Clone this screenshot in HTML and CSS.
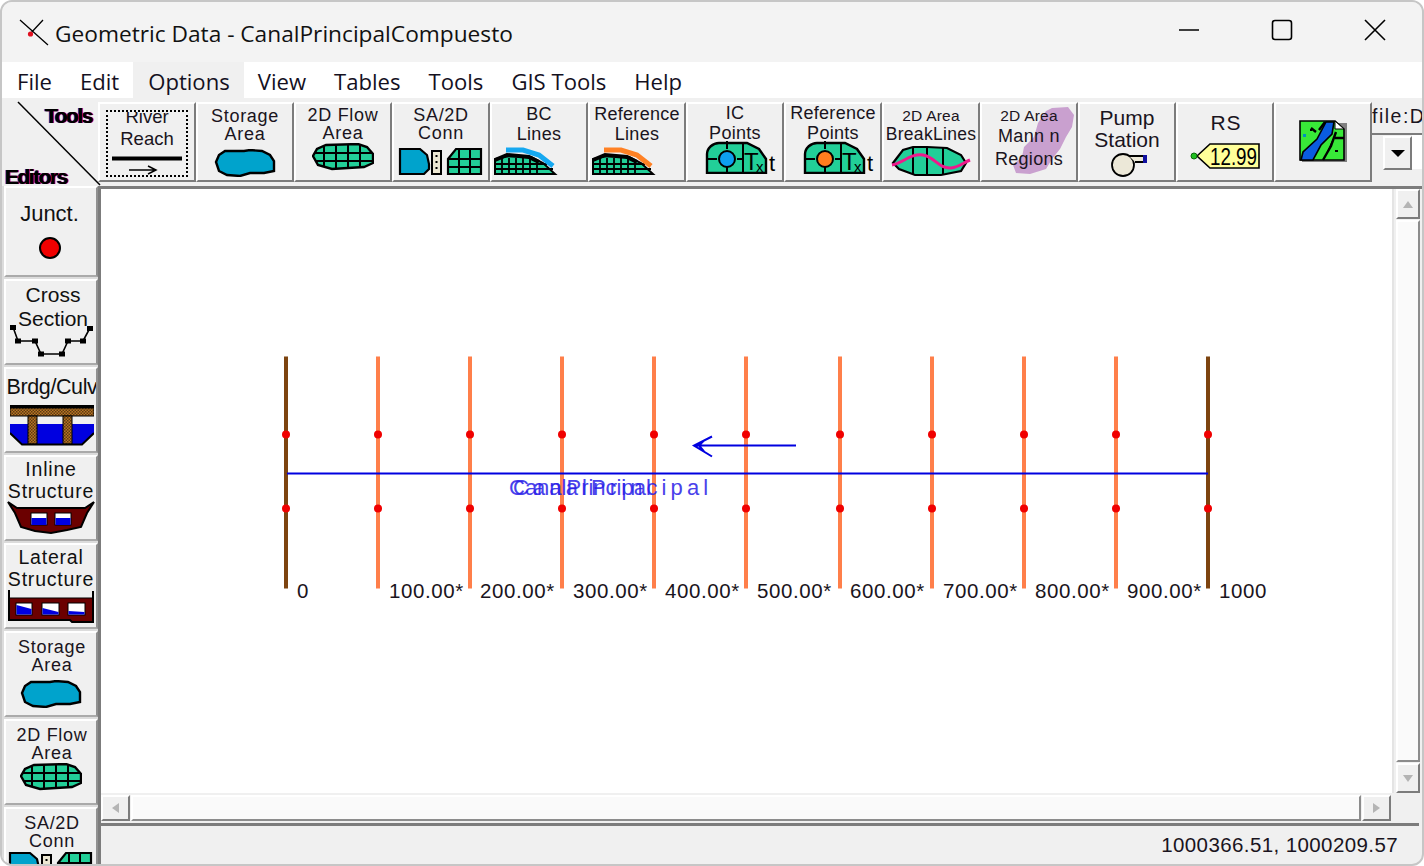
FILE: index.html
```html
<!DOCTYPE html>
<html lang="en">
<head>
<meta charset="utf-8">
<title>Geometric Data - CanalPrincipalCompuesto</title>
<link rel="stylesheet" href="styles.css">
</head>
<body>
<svg class="defs" width="0" height="0" aria-hidden="true">
  <defs>
    <pattern id="dither" width="3" height="3" patternUnits="userSpaceOnUse">
      <rect width="3" height="3" fill="#b87424"/>
      <rect width="1.5" height="1.5" fill="#5c3a12"/>
      <rect x="1.5" y="1.5" width="1.5" height="1.5" fill="#5c3a12"/>
    </pattern>
    <symbol id="i-storage" viewBox="0 0 62 28">
      <path d="M2 13 L5 6 L11 2 L30 2 L36 1 L48 2 L56 6 L60 12 L60 22 L50 24 L36 24 L26 27 L13 26 L5 22 Z" fill="#00a3cc" stroke="#000" stroke-width="2.4"/>
    </symbol>
    <clipPath id="c-blob"><path d="M1 13 L5 6 L14 2 L46 1 L55 4 L61 11 L61 20 L52 24 L20 26 L6 22 Z"/></clipPath>
    <symbol id="i-flow" viewBox="0 0 62 28">
      <g clip-path="url(#c-blob)">
        <rect width="62" height="28" fill="#22cf98"/>
        <path d="M0 10H62M0 18H62M12 0V28M24 0V28M36 0V28M48 0V28" stroke="#000" stroke-width="2"/>
      </g>
      <path d="M1 13 L5 6 L14 2 L46 1 L55 4 L61 11 L61 20 L52 24 L20 26 L6 22 Z" fill="none" stroke="#000" stroke-width="2.4"/>
    </symbol>
    <symbol id="i-conn" viewBox="0 0 86 30">
      <path d="M2 2 L22 2 L29 8 L31 17 L31 22 L26 27 L2 27 Z" fill="#00a3cc" stroke="#000" stroke-width="2.2"/>
      <rect x="34" y="4" width="9" height="23" fill="#ece7d2" stroke="#000" stroke-width="2"/>
      <path d="M38.5 8v2M38.5 14v2M38.5 20v2" stroke="#000" stroke-width="2"/>
      <path d="M50 27 L50 12 L58 2 L83 2 L83 27 Z" fill="#22cf98" stroke="#000" stroke-width="2.2"/>
      <path d="M50 12H83M50 20H83M61 2V27M72 2V27" stroke="#000" stroke-width="2"/>
    </symbol>
    <symbol id="i-bridgeline" viewBox="0 0 66 30">
      <path d="M2 28 L2 13 L16 10 L38 11 L50 17 L62 28 Z" fill="#22cf98" stroke="#000" stroke-width="2"/>
      <path d="M2 18H54M2 23H60M9 12V28M16 12V28M23 12V28M30 12V28M37 12V28M44 14V28" stroke="#000" stroke-width="1.8"/>
      <path d="M2 14 L14 9 L36 11 L46 16" fill="none" stroke="#000" stroke-width="4"/>
      <path class="edge" d="M13 4 L30 4 L46 9 L60 20" fill="none" stroke-width="5"/>
    </symbol>
    <symbol id="i-point" viewBox="0 0 76 33">
      <path d="M2 32 V13 C2 7 8 2 14 2 H42 L54 8 L61 18 V32 Z" fill="#22cf98" stroke="#000" stroke-width="2.4"/>
      <path d="M2 18H12M32 18H38M22 0V8M22 26V32M38 2V32" stroke="#000" stroke-width="2"/>
      <circle class="pt" cx="22" cy="18" r="8" stroke="#000" stroke-width="2"/>
      <text x="39" y="29" class="tx">T</text>
      <text x="51" y="31" class="tx-sm">x</text>
      <text x="64" y="30" class="tx-t">t</text>
    </symbol>
  </defs>
</svg>

<div class="window">
  <header class="titlebar">
    <svg class="app-icon" viewBox="0 0 30 30">
      <path d="M1 2 L29 27 M24 2 L11 16" stroke="#000" stroke-width="1.3" fill="none"/>
      <circle cx="11.5" cy="16" r="2.6" fill="#e01020"/>
    </svg>
    <span class="title">Geometric Data - CanalPrincipalCompuesto</span>
    <div class="caption">
      <svg class="cap" viewBox="0 0 46 46"><path d="M13 23H33" stroke="#000" stroke-width="1.6"/></svg>
      <svg class="cap" viewBox="0 0 46 46"><rect x="13.5" y="13.5" width="19" height="19" rx="2.5" fill="none" stroke="#000" stroke-width="1.6"/></svg>
      <svg class="cap" viewBox="0 0 46 46"><path d="M13 13L33 33M33 13L13 33" stroke="#000" stroke-width="1.6"/></svg>
    </div>
  </header>

  <nav class="menubar">
    <span class="menu">File</span>
    <span class="menu">Edit</span>
    <span class="menu menu-hover">Options</span>
    <span class="menu">View</span>
    <span class="menu">Tables</span>
    <span class="menu">Tools</span>
    <span class="menu">GIS Tools</span>
    <span class="menu">Help</span>
  </nav>

  <div class="toprow">
    <div class="corner">
      <svg class="corner-line" viewBox="0 0 100 88"><path d="M16 4L98 87" stroke="#000" stroke-width="1.5"/></svg>
      <span class="corner-tools">Tools</span>
      <span class="corner-editors">Editors</span>
    </div>
    <div class="toolbar">
      <button class="btn b-river">
        <span class="dotted">
          <span class="lbl l-river">River<br>Reach</span>
          <svg class="ic-river" viewBox="0 0 72 22"><path d="M1 2.5H71" stroke="#000" stroke-width="4"/><path d="M18 14H44M37 10L45 14L37 18" stroke="#000" stroke-width="1.5" fill="none"/></svg>
        </span>
      </button>
      <button class="btn b-sto"><span class="lbl l-sm">Storage<br>Area</span><svg class="ic-62"><use href="#i-storage"/></svg></button>
      <button class="btn b-flow"><span class="lbl l-sm">2D Flow<br>Area</span><svg class="ic-62"><use href="#i-flow"/></svg></button>
      <button class="btn b-sa"><span class="lbl l-sm">SA/2D<br>Conn</span><svg class="ic-conn"><use href="#i-conn"/></svg></button>
      <button class="btn b-bc"><span class="lbl l-bc">BC<br>Lines</span><svg class="ic-line line-blue"><use href="#i-bridgeline"/></svg></button>
      <button class="btn b-bc"><span class="lbl l-bc">Reference<br>Lines</span><svg class="ic-line line-orange"><use href="#i-bridgeline"/></svg></button>
      <button class="btn b-pt"><span class="lbl l-bc">IC<br>Points</span><svg class="ic-pt pt-blue"><use href="#i-point"/></svg></button>
      <button class="btn b-pt"><span class="lbl l-bc">Reference<br>Points</span><svg class="ic-pt pt-orange"><use href="#i-point"/></svg></button>
      <button class="btn b-brk"><span class="lbl l-tiny">2D Area</span><span class="lbl l-brk">BreakLines</span>
        <svg class="ic-brk" viewBox="0 0 80 32">
          <path d="M2 18 L12 5 L22 2 L36 2 L56 3 L70 10 L75 18 L70 26 L50 30 L24 30 L8 24 Z" fill="#22cf98" stroke="#000" stroke-width="2.2"/>
          <path d="M22 2V30M36 2V30M52 3V30" stroke="#000" stroke-width="2"/>
          <path d="M1 20 C12 18 20 8 32 10 C44 12 48 24 60 23 C68 22 72 18 79 15" fill="none" stroke="#ee1a8c" stroke-width="3"/>
        </svg>
      </button>
      <button class="btn b-man">
        <svg class="ic-blob" viewBox="0 0 70 70"><path d="M46 1 L62 0 L68 8 L66 20 L60 30 L54 42 L46 52 L40 62 L24 67 L10 66 L7 58 L16 50 L18 40 L28 30 L32 16 L40 4 Z" fill="#c9a0cf"/></svg>
        <span class="lbl l-tiny lm">2D Area</span><span class="lbl l-mann">Mann n</span><span class="lbl l-mann">Regions</span>
      </button>
      <button class="btn b-pump"><span class="lbl l-pump">Pump<br>Station</span>
        <svg class="ic-pump" viewBox="0 0 40 26">
          <circle cx="13" cy="14" r="11" fill="#ece8d8" stroke="#000" stroke-width="1.8"/>
          <path d="M19 5H35V11H25" fill="#ece8d8" stroke="#000" stroke-width="1.8"/>
          <rect x="33" y="4" width="4" height="8" fill="#1010a0"/>
        </svg>
      </button>
      <button class="btn b-rs"><span class="lbl l-rs">RS</span>
        <svg class="ic-tag" viewBox="0 0 70 28">
          <path d="M7 14 L20 2 L69 2 L69 26 L20 26 Z" fill="#ffff99" stroke="#000" stroke-width="1.6"/>
          <path d="M2 14H8" stroke="#000" stroke-width="1.5"/>
          <circle cx="4" cy="14" r="3" fill="#20c020" stroke="#0a6a0a"/>
          <text x="20" y="23" class="tag-txt" textLength="47" lengthAdjust="spacingAndGlyphs">12.99</text>
        </svg>
      </button>
      <button class="btn b-map">
        <svg class="ic-map" viewBox="0 0 48 42">
          <rect x="3" y="3" width="45" height="39" fill="#808080"/>
          <path d="M1 1 H36 L45 9 V40 H1 Z" fill="#38e838" stroke="#000" stroke-width="1.6"/>
          <path d="M36 18H45M37 12L32 26L24 40M12 8L17 12M26 2L20 10" stroke="#000" stroke-width="2.4"/>
          <path d="M2 40 L4 32 L18 19 L27 2 L35 2 L33 14 L22 25 L14 40 Z" fill="#0a5ce0" stroke="#000" stroke-width="1.6"/>
          <path d="M36 1 L45 9 L36 9 Z" fill="#fff" stroke="#000"/>
          <rect x="4" y="14" width="3" height="3" fill="#0090c0"/>
          <path d="M36 31h3M11 10h2" stroke="#000" stroke-width="2"/>
        </svg>
      </button>
    </div>
    <div class="filebox">
      <span class="file-lbl">file:D</span>
      <div class="combo">
        <span class="combo-btn"><i class="tri-down"></i></span>
        <span class="combo-field"></span>
      </div>
    </div>
  </div>

  <div class="mainrow">
    <aside class="sidebar">
      <button class="sbtn s-j"><span class="slbl l-j">Junct.</span><i class="junct-dot"></i></button>
      <button class="sbtn s-c"><span class="slbl l-c">Cross<br>Section</span>
        <svg class="ic-cross" viewBox="0 0 86 34">
          <path d="M5 2L10 16H27L33 29H54L60 16H75L82 3" fill="none" stroke="#000" stroke-width="1.6"/>
          <g><rect x="2" y="0" width="6" height="5"/><rect x="7" y="13.5" width="6" height="5"/><rect x="24" y="13.5" width="6" height="5"/><rect x="30" y="26.5" width="6" height="5"/><rect x="51" y="26.5" width="6" height="5"/><rect x="57" y="13.5" width="6" height="5"/><rect x="72" y="13.5" width="6" height="5"/><rect x="79" y="1" width="6" height="5"/></g>
        </svg>
      </button>
      <button class="sbtn s-b"><span class="slbl l-b">Brdg/Culv</span>
        <svg class="ic-brdg" viewBox="0 0 84 42">
          <path d="M0 19H84V28L72 39H12L0 28Z" fill="#0000e0"/>
          <rect x="0" y="0" width="84" height="3" fill="#000"/>
          <rect x="0" y="3" width="84" height="8" fill="url(#dither)" stroke="#000" stroke-width="1"/>
          <rect x="18" y="11" width="9" height="28" fill="url(#dither)" stroke="#000"/>
          <rect x="53" y="11" width="9" height="28" fill="url(#dither)" stroke="#000"/>
          <path d="M0 28L12 39.5H72L84 28" fill="none" stroke="#000" stroke-width="2"/>
        </svg>
      </button>
      <button class="sbtn s-i"><span class="slbl l-i">Inline<br>Structure</span>
        <svg class="ic-inline" viewBox="0 0 88 34">
          <path d="M1 1L8 12L14 26L28 30L44 32L60 29L74 26L80 12L87 1L78 7H10Z" fill="#6b0000" stroke="#000" stroke-width="2"/>
          <rect x="24" y="12" width="16" height="12" fill="#fff" stroke="#000"/><rect x="24.5" y="17" width="15" height="7" fill="#0000e0"/>
          <rect x="48" y="12" width="16" height="12" fill="#fff" stroke="#000"/><rect x="48.5" y="17" width="15" height="7" fill="#0000e0"/>
        </svg>
      </button>
      <button class="sbtn s-l"><span class="slbl l-i">Lateral<br>Structure</span>
        <svg class="ic-lat" viewBox="0 0 86 34">
          <rect x="2" y="8" width="82" height="23" fill="#6b0000"/>
          <path d="M1 0V30H62L64 32H85V1" fill="none" stroke="#000" stroke-width="2"/>
          <path d="M2 8H84" stroke="#000" stroke-width="1"/>
          <rect x="8" y="13" width="16" height="12" fill="#fff" stroke="#000"/><path d="M8.5 15L23.5 19V24.5H8.5Z" fill="#0000e0"/>
          <rect x="34" y="13" width="17" height="12" fill="#fff" stroke="#000"/><path d="M34.5 18L50.5 22V24.5H34.5Z" fill="#0000e0"/>
          <rect x="60" y="13" width="17" height="12" fill="#fff" stroke="#000"/><path d="M60.5 21L76.5 22V24.5H60.5Z" fill="#0000e0"/>
        </svg>
      </button>
      <button class="sbtn s-s"><span class="lbl l-sm">Storage<br>Area</span><svg class="ic-62 ic-side"><use href="#i-storage"/></svg></button>
      <button class="sbtn s-f"><span class="lbl l-sm">2D Flow<br>Area</span><svg class="ic-62 ic-side2"><use href="#i-flow"/></svg></button>
      <button class="sbtn s-a"><span class="lbl l-sm">SA/2D<br>Conn</span><svg class="ic-conn ic-side3"><use href="#i-conn"/></svg></button>
    </aside>

    <div class="center">
      <div class="view-row">
        <div class="canvas">
          <svg class="plot" viewBox="101 189 1291 603">
            <g class="xs-end"><path d="M286 356V588M1208 356V588"/></g>
            <g class="xs"><path d="M378 356V588M470 356V588M562 356V588M654 356V588M746 356V588M840 356V588M932 356V588M1024 356V588M1116 356V588"/></g>
            <path class="reach" d="M287 473H1208"/>
            <path class="reach" d="M796 445H694M712 436L694 445L712 456M704 440L699 445L704 451"/>
            <g class="banks">
              <circle cx="286" cy="434" r="4"/><circle cx="378" cy="434" r="4"/><circle cx="470" cy="434" r="4"/><circle cx="562" cy="434" r="4"/><circle cx="654" cy="434" r="4"/><circle cx="746" cy="434" r="4"/><circle cx="840" cy="434" r="4"/><circle cx="932" cy="434" r="4"/><circle cx="1024" cy="434" r="4"/><circle cx="1116" cy="434" r="4"/><circle cx="1208" cy="434" r="4"/>
              <circle cx="286" cy="508" r="4"/><circle cx="378" cy="508" r="4"/><circle cx="470" cy="508" r="4"/><circle cx="562" cy="508" r="4"/><circle cx="654" cy="508" r="4"/><circle cx="746" cy="508" r="4"/><circle cx="840" cy="508" r="4"/><circle cx="932" cy="508" r="4"/><circle cx="1024" cy="508" r="4"/><circle cx="1116" cy="508" r="4"/><circle cx="1208" cy="508" r="4"/>
            </g>
            <text class="river" x="509" y="494">CanalPrincipal</text>
            <text class="river river-wide" x="513" y="494">CanalPrincipal</text>
            <g class="rs">
              <text x="297" y="597">0</text>
              <text x="389" y="597">100.00*</text>
              <text x="480" y="597">200.00*</text>
              <text x="573" y="597">300.00*</text>
              <text x="665" y="597">400.00*</text>
              <text x="757" y="597">500.00*</text>
              <text x="850" y="597">600.00*</text>
              <text x="943" y="597">700.00*</text>
              <text x="1035" y="597">800.00*</text>
              <text x="1127" y="597">900.00*</text>
              <text x="1219" y="597">1000</text>
            </g>
          </svg>
        </div>
        <div class="vscroll">
          <span class="sb-btn sb-v"><i class="tri tri-up"></i></span>
          <span class="sb-track-v"></span>
          <span class="sb-btn sb-v"><i class="tri tri-dn"></i></span>
        </div>
      </div>
      <div class="hscroll">
        <span class="sb-btn sb-h"><i class="tri tri-lf"></i></span>
        <span class="sb-track-h"></span>
        <span class="sb-btn sb-h"><i class="tri tri-rt"></i></span>
      </div>
      <div class="status"><span>1000366.51, 1000209.57</span></div>
    </div>
  </div>
</div>
</body>
</html>
```

FILE: styles.css
```css
* { box-sizing: border-box; }
html, body { margin: 0; height: 100%; background: #fff; overflow: hidden; }
.defs { position: absolute; }

.window {
  width: 1424px; height: 866px;
  display: flex; flex-direction: column;
  background: #f0f0f0;
  border: 2px solid #c6c6c6;
  border-radius: 12px;
  overflow: hidden;
  font-family: "Liberation Sans", Arial, sans-serif;
  color: #000;
}

/* title bar */
.titlebar { height: 60px; flex: none; display: flex; align-items: center; background: #f3f3f3; padding-left: 17px; }
.app-icon { width: 30px; height: 30px; flex: none; margin-top: 2px; }
.title { font-family: "Open Sans", sans-serif; font-size: 22.7px; margin-left: 6px; margin-top: 2px; color: #111; }
.caption { margin-left: auto; margin-right: 24px; margin-top: -4px; display: flex; gap: 47px; }
.cap { width: 46px; height: 46px; display: block; }

/* menu */
.menubar { height: 36px; flex: none; display: flex; background: #fff; padding-left: 1px; font-family: "Open Sans", sans-serif; font-size: 22.1px; }
.menu { padding: 1px 14px 0; line-height: 36px; color: #14101e; }
.menu-hover { background: #f0f0f0; padding-left: 15px; padding-right: 14px; }

/* top row */
.toprow { height: 88px; flex: none; display: flex; background: #f0f0f0; }
.corner { width: 96px; flex: none; position: relative; }
.corner-line { position: absolute; left: 0; top: 0; width: 100px; height: 88px; }
.corner-tools, .corner-editors { position: absolute; font-weight: 700; font-size: 21px; letter-spacing: -1.5px; text-shadow: 1px 0 0 #d00030, -1px 0 0 #0030c0; }
.corner-tools { left: 43px; top: 6px; }
.corner-editors { left: 3px; top: 67px; }

.toolbar { display: flex; padding-top: 4px; }
.btn, .sbtn {
  appearance: none; margin: 0; padding: 0;
  background: #f0f0f0;
  border: 2px solid; border-color: #fff #7c7c7c #7c7c7c #fff;
  font-family: "Liberation Sans", Arial, sans-serif;
  color: #000;
  display: flex; flex-direction: column; align-items: center; justify-content: flex-start;
  position: relative; overflow: hidden;
}
.btn { width: 98px; height: 80px; flex: none; }

.lbl { display: block; text-align: center; color: #1a1420; }
.l-sm { font-size: 18px; line-height: 17.5px; letter-spacing: .7px; }
.l-bc { font-size: 18px; line-height: 19.5px; letter-spacing: .3px; }
.l-tiny { font-size: 15.5px; line-height: 18px; letter-spacing: .2px; }
.l-brk { font-size: 17.5px; line-height: 18px; white-space: nowrap; letter-spacing: .3px; }
.l-mann { font-size: 18px; line-height: 23px; position: relative; letter-spacing: .3px; }
.l-pump { font-size: 21px; line-height: 22px; }
.l-rs { font-size: 21px; line-height: 24px; letter-spacing: 1px; margin-left: 2px; }

.b-river { padding-top: 6px; }
.dotted { width: 82px; height: 67px; border: 2px dotted #000; display: flex; flex-direction: column; align-items: center; overflow: hidden; }
.l-river { font-size: 18.5px; line-height: 22px; margin-top: -6px; }
.ic-river { width: 72px; height: 22px; margin-top: 6px; flex: none; }

.ic-62 { width: 62px; height: 28px; flex: none; }
.b-sto { padding-top: 4px; }
.b-sto .ic-62 { margin-top: 6px; }
.b-flow { padding-top: 3px; }
.b-flow .ic-62 { margin-top: 1px; }
.b-sa { padding-top: 3px; }
.ic-conn { width: 86px; height: 30px; flex: none; margin-top: 5px; }
.b-bc { padding-top: 1px; }
.ic-line { width: 66px; height: 30px; flex: none; margin-top: 2px; margin-right: 26px; }
.line-blue { --edge: #16a8f0; }
.line-orange { --edge: #ff8124; }
.edge { stroke: var(--edge); }
.b-pt .ic-pt { width: 76px; height: 33px; flex: none; margin-top: -2px; margin-left: 16px; }
.pt-blue { --pt: #0d9ff0; }
.pt-orange { --pt: #ff7d1e; }
.pt { fill: var(--pt); }
.tx { font: 24px "Liberation Sans", sans-serif; }
.tx-sm { font: 15px "Liberation Sans", sans-serif; }
.tx-t { font: 22px "Liberation Sans", sans-serif; }
.b-brk { padding-top: 3px; }
.ic-brk { width: 80px; height: 32px; flex: none; margin-top: 2px; }
.b-man { padding-top: 3px; }
.ic-blob { position: absolute; left: 24px; top: 3px; width: 70px; height: 70px; }
.lm { position: relative; }
.b-pump { padding-top: 3px; }
.ic-pump { width: 40px; height: 26px; flex: none; margin-left: 5px; }
.b-rs { padding-top: 7px; }
.ic-tag { width: 70px; height: 28px; display: block; margin-top: 7px; flex: none; }
.tag-txt { font: 24px "Liberation Sans", sans-serif; }
.b-map { padding-top: 16px; }
.ic-map { width: 48px; height: 42px; flex: none; }

/* file box */
.filebox { flex: 1; min-width: 0; overflow: hidden; position: relative; }
.file-lbl { display: block; font-size: 19.5px; line-height: 20px; margin-top: 8px; white-space: nowrap; letter-spacing: 1.5px; color: #1a1420; }
.combo { margin-top: 7px; border-top: 2px solid #7c7c7c; height: 38px; display: flex; padding-left: 11px; }
.combo-btn { width: 29px; height: 34px; margin-top: 1px; border: 2px solid; border-color: #fff #7c7c7c #7c7c7c #fff; display: flex; align-items: center; justify-content: center; }
.tri-down { width: 0; height: 0; border-left: 7px solid transparent; border-right: 7px solid transparent; border-top: 7px solid #000; }
.combo-field { flex: 1; background: #fff; height: 34px; }

/* main */
.mainrow { flex: 1; min-height: 0; display: flex; }
.sidebar { width: 99px; flex: none; display: flex; flex-direction: column; gap: 2px; overflow: hidden; padding-left: 2px; border-right: 3px solid #7c7c7c; background: #dcdcdc; }
.sbtn { width: 94px; flex: none; height: 86px; border-color: #fff #909090 #aaa #fff; }
.s-j { height: 91px; padding: 14px 3px 0 0; }
.slbl { display: block; text-align: center; font-size: 22px; color: #111; white-space: nowrap; }
.l-j { line-height: 24px; }
.junct-dot { width: 22px; height: 22px; border-radius: 50%; background: #f00000; border: 2px solid #000; margin-top: 11px; flex: none; }
.s-c { padding-top: 2px; }
.l-c { font-size: 21px; line-height: 24px; margin-left: 4px; }
.ic-cross { width: 86px; height: 34px; flex: none; margin-top: -6px; }
.s-b { padding-top: 5px; }
.l-b { font-size: 21.5px; line-height: 26px; letter-spacing: -.4px; margin-left: 2px; }
.ic-brdg { width: 84px; height: 42px; flex: none; margin: 5px 0 0 2px; }
.s-i { padding-top: 1px; }
.l-i { font-size: 19.5px; line-height: 22px; letter-spacing: .8px; }
.ic-inline { width: 88px; height: 34px; flex: none; margin-top: -1px; }
.s-l { padding-top: 1px; }
.ic-lat { width: 86px; height: 34px; flex: none; margin-top: 0; }
.s-s, .s-f, .s-a { padding-top: 6px; }
.ic-side { margin-top: 6px; }
.ic-side2 { margin-top: 1px; }
.ic-side3 { margin-top: 1px; }
.s-a { height: 60px; flex: none; }
.s-a .l-sm, .s-s .l-sm, .s-f .l-sm { margin-left: 2px; }

.center { flex: 1; min-width: 0; display: flex; flex-direction: column; }
.view-row { height: 607px; flex: none; display: flex; border-top: 3px solid #7c7c7c; }
.canvas { width: 1293px; flex: none; background: #fff; border-right: 2px solid #e4e4e4; overflow: hidden; }
.plot { width: 1291px; height: 604px; display: block; }
.xs path { stroke: #ff7f4a; stroke-width: 4; fill: none; }
.xs-end path { stroke: #7d4410; stroke-width: 4; fill: none; }
.reach { stroke: #0000e0; stroke-width: 2; fill: none; }
.banks circle { fill: #f00000; }
.river { font: 22px "Liberation Sans", sans-serif; fill: #2a20e8; opacity: .85; }
.river-wide { letter-spacing: 4.1px; }
.rs text { font: 20.5px "Liberation Sans", sans-serif; letter-spacing: .6px; fill: #1a1420; }

/* scrollbars */
.vscroll { flex: 1; display: flex; flex-direction: column; padding: 0 2px; }
.sb-btn { background: #f0f0f0; border: 2px solid; border-color: #fff #7c7c7c #7c7c7c #fff; display: flex; align-items: center; justify-content: center; flex: none; }
.sb-v { height: 30px; }
.sb-h { width: 29px; height: 26px; }
.sb-track-v { flex: 1; background: #fafafa; border: 2px solid; border-color: #fff #8c8c8c #8c8c8c #fff; margin: 1px 0; }
.hscroll { height: 30px; flex: none; display: flex; padding: 2px 31px 2px 0; gap: 1px; border-bottom: 2px solid #f0f0f0; }
.sb-track-h { flex: 1; background: #fafafa; height: 26px; border: 2px solid; border-color: #fff #8c8c8c #8c8c8c #fff; }
.tri { width: 0; height: 0; border: 5px solid transparent; }
.tri-up { border-bottom: 7px solid #b4b4b4; border-top: 0; }
.tri-dn { border-top: 7px solid #b4b4b4; border-bottom: 0; }
.tri-lf { border-right: 7px solid #b4b4b4; border-left: 0; }
.tri-rt { border-left: 7px solid #b4b4b4; border-right: 0; }

.status { flex: 1; border-top: 3px solid #7c7c7c; display: flex; justify-content: flex-end; align-items: center; padding-right: 21px; font-size: 20.5px; letter-spacing: .4px; color: #1a1420; margin-right: 3px; }
```
